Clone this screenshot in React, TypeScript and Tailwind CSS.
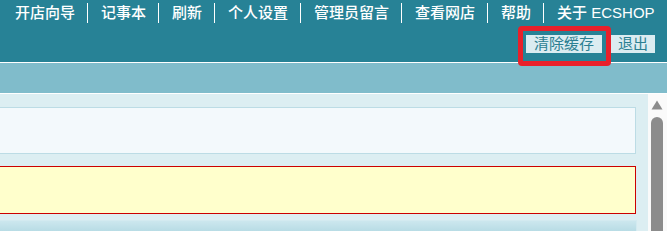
const navItems = ['开店向导', '记事本', '刷新', '个人设置', '管理员留言', '查看网店', '帮助', '关于 ECSHOP'];

export default function App() {
  return (
    <div
      className="relative w-[667px] h-[231px] overflow-hidden bg-white flex flex-col"
      style={{ fontFamily: '"Liberation Sans", "Noto Sans CJK SC", sans-serif' }}
    >
      {/* top menu */}
      <div className="h-[62px] bg-[#278296] flex flex-col">
        <nav className="flex items-center pl-[2px] mt-[3px] h-[20px]">
          {navItems.map((label, i) => (
            <a
              key={label}
              className={`pl-[13px] pr-[12px] h-[20px] leading-[20px] text-[15px] font-medium text-white whitespace-nowrap ${
                i > 0 ? 'border-l border-white' : ''
              }`}
            >
              {label}
            </a>
          ))}
        </nav>
        <div className="flex justify-end gap-[9px] pr-[12px] mt-[12px]">
          <button className="h-[18px] px-[8px] bg-[#dbecf1] text-[#2b7f92] text-[15px] leading-[18px]">清除缓存</button>
          <button className="h-[18px] px-[7px] bg-[#dbecf1] text-[#2b7f92] text-[15px] leading-[18px]">退出</button>
        </div>
      </div>
      <div className="h-[30px] border-t border-white bg-[#80bccb] box-content" />
      <div className="h-px bg-white" />

      {/* body */}
      <div className="flex flex-1 min-h-0">
        <div className="w-[648px] bg-[#dceef2] pt-[13px] pr-[12px] flex flex-col">
          <div className="h-[47px] bg-[#f3f9fc] border-y border-r border-[#bcdce5]" />
          <div className="h-[48px] mt-[12px] bg-[#ffffcc] border-y border-r border-[#cc0000]" />
          <div className="flex-1 mt-[6px] -mr-px border-t border-r border-[#d3eaf0] bg-gradient-to-b from-[#cce7ee] to-[#b8dce5]" />
        </div>
        <div className="flex-1 bg-[#fafafa] pl-[3px] pr-[4px] pt-[6px] flex flex-col items-center">
          <svg width="12" height="10" viewBox="0 0 12 10" className="block">
            <path d="M6 0.5 L11.5 9.5 L0.5 9.5 Z" fill="#8c8c8c" />
          </svg>
          <div className="mt-[7px] w-[12px] flex-1 bg-[#8c8c8c] rounded-t-full" />
        </div>
      </div>

      {/* highlight annotation */}
      <div className="absolute left-[518px] top-[26px] w-[93px] h-[40px] border-[5px] border-[#e8202a] rounded-[4px]" />
    </div>
  );
}
